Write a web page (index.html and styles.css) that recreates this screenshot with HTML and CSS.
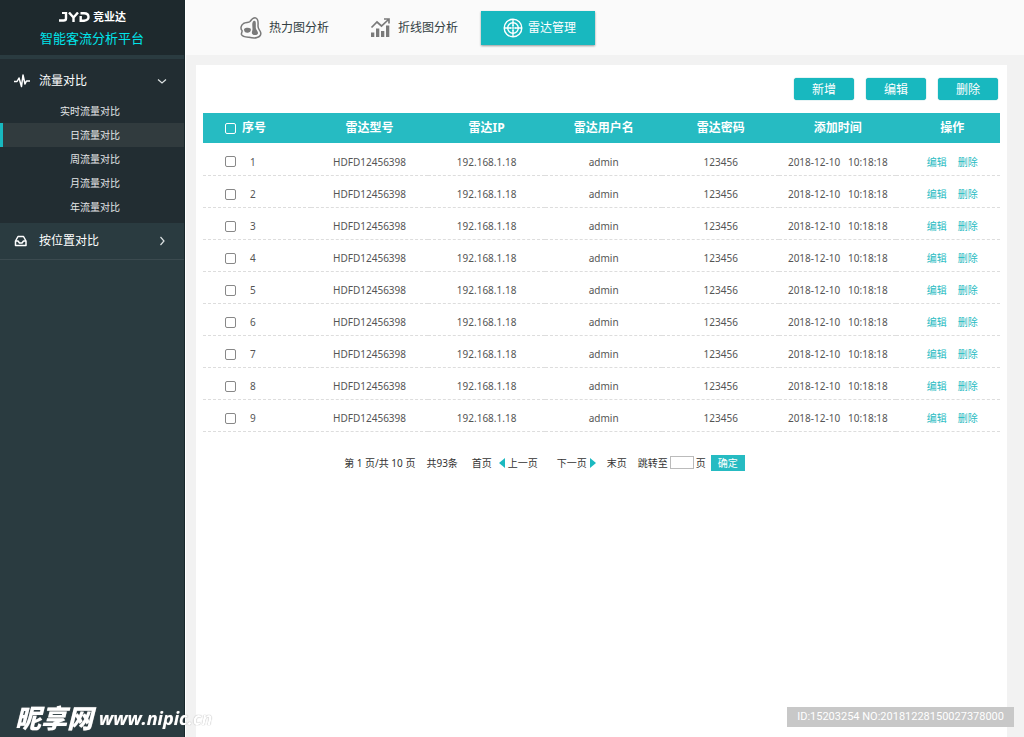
FILE: index.html
```html
<!DOCTYPE html>
<html lang="zh-CN">
<head>
<meta charset="utf-8">
<title>智能客流分析平台</title>
<link rel="stylesheet" href="styles.css">
</head>
<body>
<div class="app">
  <aside class="sidebar">
    <div class="brand">
      <div class="logo">
        <svg class="logo-mark" viewBox="0 0 32 10" aria-label="JYD" role="img">
          <g fill="none" stroke="#fff" stroke-width="2.4"><path d="M8 0V6.500Q8 8.500 5.500 8.500H1"/><path d="M11 0.500L15.500 5.500L20 0.500M15.500 5V10"/><path d="M21.500 8.700H26Q30.500 8.200 30.500 5Q30.500 1.300 26 1.300H22.500M22.700 4V9"/></g>
          <path d="M4 0H9V2H4Z" fill="#fff"/>
        </svg>
        <span>竞业达</span>
      </div>
      <h1 class="brand-title">智能客流分析平台</h1>
    </div>
    <nav class="menu">
      <section class="menu-open">
        <button class="menu-head" type="button" aria-expanded="true">
          <svg class="menu-icon" viewBox="0 0 16 14"><path d="M0 7.500H3L5 4L7.500 12.500L9 1L11 10L12.500 7H16" fill="none" stroke="#fff" stroke-width="1.500" stroke-linejoin="round"/></svg>
          <span>流量对比</span>
          <svg class="chevron" viewBox="0 0 10 10"><path d="M1 3.500L5 7L9 3.500" fill="none" stroke="#dde2e3" stroke-width="1.200"/></svg>
        </button>
        <ul class="submenu">
          <li><a href="#">实时流量对比</a></li>
          <li><a class="current" href="#">日流量对比</a></li>
          <li><a href="#">周流量对比</a></li>
          <li><a href="#">月流量对比</a></li>
          <li><a href="#">年流量对比</a></li>
        </ul>
      </section>
      <button class="menu-head menu-closed" type="button" aria-expanded="false">
        <svg class="menu-icon" viewBox="0 0 16 14"><path d="M1.500 7L4 2.500H9.500L12 7V11.500H1.500ZM1.500 7H4L5.500 9H8L9.500 7H12" fill="none" stroke="#fff" stroke-width="1.500" stroke-linejoin="round"/></svg>
        <span>按位置对比</span>
        <svg class="chevron" viewBox="0 0 10 10"><path d="M3.500 1L7 5L3.500 9" fill="none" stroke="#dde2e3" stroke-width="1.200"/></svg>
      </button>
    </nav>
  </aside>
  <div class="main">
    <header class="topbar">
      <a class="tab tab-heat" href="#">
        <svg class="tab-icon" viewBox="0 0 22 22"><path d="M15.500 0.900C13 0.500 11.500 2.500 10 4.500C8.500 6 6 5 3.500 6.500C0.500 8.500 0.500 12 2 13.500C2.500 15 1 16 1.500 17.500C2.500 20 6 20 9 20.200C12 21 14.500 21.500 17 20.500C20 20 21.500 17.500 20.500 15C19.500 12.500 18 12 18 9C18 6 19 2 15.500 0.900Z" fill="none" stroke="#7a7a7a" stroke-width="1.500"/><path d="M13.500 4C15.500 3 16 5 15.800 8V11C16 13 18 14 18 16C18 18.500 14 18.500 12.500 17.200C11 16 12.500 14 12.500 12C12.500 9.500 11.500 6 13.500 4ZM4 12C5.500 10.500 9 10.500 10.500 11.500C11.500 13 10.500 15.500 8 15.800C5.500 16 4 15 4 12Z" fill="#7a7a7a"/></svg>
        <span>热力图分析</span>
      </a>
      <a class="tab tab-line" href="#">
        <svg class="tab-icon" viewBox="0 0 22 22"><path d="M1 15.500H4.300V20H1ZM6 11.500H9.300V20H6ZM11 14H14.300V20H11ZM16 8.500H19.300V20H16Z" fill="#7a7a7a"/><path d="M1.500 10.500L7 5L11.500 9L18.500 2.500M14 2H19V6.500" fill="none" stroke="#7a7a7a" stroke-width="1.700"/></svg>
        <span>折线图分析</span>
      </a>
      <a class="tab tab-current" href="#" aria-current="page">
        <svg class="tab-icon" viewBox="0 0 22 22"><g fill="none" stroke="#fff"><circle cx="11" cy="11" r="8.800" stroke-width="1.400"/><circle cx="11" cy="11" r="5.300" stroke-width="1.400"/><path d="M11 2V9M11 13V20M2 11H9M13 11H20" stroke-width="1.400"/><path d="M11 8V14M8 11H14" stroke-width="1"/></g></svg>
        <span>雷达管理</span>
      </a>
    </header>
    <main class="panel">
      <div class="actions">
        <button type="button">新增</button>
        <button type="button">编辑</button>
        <button type="button">删除</button>
      </div>
      <table class="radar">
        <thead>
          <tr>
            <th class="col-index"><label><input type="checkbox" class="check check-all">序号</label></th>
            <th>雷达型号</th><th>雷达IP</th><th>雷达用户名</th><th>雷达密码</th><th>添加时间</th>
            <th class="col-ops">操作</th>
          </tr>
        </thead>
        <tbody>
          <tr><td class="col-index"><label><input type="checkbox" class="check">1</label></td><td>HDFD12456398</td><td>192.168.1.18</td><td>admin</td><td>123456</td><td><span class="stamp"><span>2018-12-10</span><span>10:18:18</span></span></td><td class="col-ops"><span class="ops"><a href="#">编辑</a><a href="#">删除</a></span></td></tr>
          <tr><td class="col-index"><label><input type="checkbox" class="check">2</label></td><td>HDFD12456398</td><td>192.168.1.18</td><td>admin</td><td>123456</td><td><span class="stamp"><span>2018-12-10</span><span>10:18:18</span></span></td><td class="col-ops"><span class="ops"><a href="#">编辑</a><a href="#">删除</a></span></td></tr>
          <tr><td class="col-index"><label><input type="checkbox" class="check">3</label></td><td>HDFD12456398</td><td>192.168.1.18</td><td>admin</td><td>123456</td><td><span class="stamp"><span>2018-12-10</span><span>10:18:18</span></span></td><td class="col-ops"><span class="ops"><a href="#">编辑</a><a href="#">删除</a></span></td></tr>
          <tr><td class="col-index"><label><input type="checkbox" class="check">4</label></td><td>HDFD12456398</td><td>192.168.1.18</td><td>admin</td><td>123456</td><td><span class="stamp"><span>2018-12-10</span><span>10:18:18</span></span></td><td class="col-ops"><span class="ops"><a href="#">编辑</a><a href="#">删除</a></span></td></tr>
          <tr><td class="col-index"><label><input type="checkbox" class="check">5</label></td><td>HDFD12456398</td><td>192.168.1.18</td><td>admin</td><td>123456</td><td><span class="stamp"><span>2018-12-10</span><span>10:18:18</span></span></td><td class="col-ops"><span class="ops"><a href="#">编辑</a><a href="#">删除</a></span></td></tr>
          <tr><td class="col-index"><label><input type="checkbox" class="check">6</label></td><td>HDFD12456398</td><td>192.168.1.18</td><td>admin</td><td>123456</td><td><span class="stamp"><span>2018-12-10</span><span>10:18:18</span></span></td><td class="col-ops"><span class="ops"><a href="#">编辑</a><a href="#">删除</a></span></td></tr>
          <tr><td class="col-index"><label><input type="checkbox" class="check">7</label></td><td>HDFD12456398</td><td>192.168.1.18</td><td>admin</td><td>123456</td><td><span class="stamp"><span>2018-12-10</span><span>10:18:18</span></span></td><td class="col-ops"><span class="ops"><a href="#">编辑</a><a href="#">删除</a></span></td></tr>
          <tr><td class="col-index"><label><input type="checkbox" class="check">8</label></td><td>HDFD12456398</td><td>192.168.1.18</td><td>admin</td><td>123456</td><td><span class="stamp"><span>2018-12-10</span><span>10:18:18</span></span></td><td class="col-ops"><span class="ops"><a href="#">编辑</a><a href="#">删除</a></span></td></tr>
          <tr><td class="col-index"><label><input type="checkbox" class="check">9</label></td><td>HDFD12456398</td><td>192.168.1.18</td><td>admin</td><td>123456</td><td><span class="stamp"><span>2018-12-10</span><span>10:18:18</span></span></td><td class="col-ops"><span class="ops"><a href="#">编辑</a><a href="#">删除</a></span></td></tr>
        </tbody>
      </table>
      <form class="pager">
        <span>第 1 页/共 10 页</span>
        <span>共93条</span>
        <a class="first" href="#">首页</a>
        <a class="step prev" href="#"><svg viewBox="0 0 6 10"><path d="M6 0V10L0 5Z" fill="#1bb9c0"/></svg>上一页</a>
        <a class="step next" href="#">下一页<svg viewBox="0 0 6 10"><path d="M0 0V10L6 5Z" fill="#1bb9c0"/></svg></a>
        <a href="#">末页</a>
        <span class="jump"><label for="page">跳转至</label><input id="page" type="text"><span>页</span><button type="button">确定</button></span>
      </form>
    </main>
  </div>
</div>
<div class="mark-site"><span class="mark-name">昵享网</span><span class="mark-url">www.nipic.cn</span></div>
<div class="mark-id">ID:15203254 NO:20181228150027378000</div>
</body>
</html>
```
FILE: styles.css
```css
* { box-sizing: border-box; }
body {
  margin: 0;
  font: 10px/16px "Noto Sans", "Noto Sans CJK SC", sans-serif;
  color: #555;
  background: #f2f2f2;
}
a { color: inherit; text-decoration: none; }
button { font: inherit; border: 0; padding: 0; cursor: pointer; }
svg { display: block; flex: none; }

.app { display: flex; min-height: 100vh; }

.sidebar {
  flex: none;
  width: 185px;
  background: #2a3b40;
  border-right: 1px solid #18272b;
  color: #fff;
}
.brand {
  height: 55px;
  padding-top: 9px;
  background: #1e292d;
  display: flex;
  flex-direction: column;
  align-items: center;
}
.logo { display: flex; align-items: center; gap: 3px; font-size: 11px; font-weight: 700; }
.logo-mark { width: 32px; height: 10px; }
.brand-title { margin: 4px 0 0; font-size: 13px; line-height: 18px; font-weight: 400; color: #00e4ea; }

.menu { padding-top: 4px; }
.menu-open { background: #222d32; padding-bottom: 4px; }
.menu-head {
  display: flex;
  align-items: center;
  width: 100%;
  height: 40px;
  padding: 3px 17px 0 14px;
  background: none;
  color: #fff;
  font-size: 12px;
}
.menu-head span { margin-left: 9px; }
.menu-icon { width: 16px; height: 14px; }
.chevron { width: 10px; height: 10px; margin-left: auto; }
.menu-closed { height: 37px; padding-top: 0; border-bottom: 1px solid #3b4a4f; }
.submenu { margin: 0; padding: 0; list-style: none; text-align: right; }
.submenu a {
  display: block;
  padding: 4px 64px 4px 0;
  color: #e4e7e8;
  border-left: 3px solid transparent;
}
.submenu .current { background: #313b3e; border-left-color: #18b8bf; }

.main { flex: 1; min-width: 0; display: flex; flex-direction: column; border-left: 1px solid #fff; }
.topbar {
  display: flex;
  align-items: center;
  gap: 41px;
  height: 55px;
  padding-left: 54px;
  background: #fafafa;
}
.tab { display: flex; align-items: center; gap: 7px; font-size: 12px; color: #333f43; }
.tab-icon { width: 22px; height: 22px; }
.tab-line { gap: 6px; }
.tab-current {
  height: 34px;
  padding: 0 19px 0 21px;
  margin-left: -18px;
  gap: 4px;
  background: #18b8bf;
  color: #fff;
  box-shadow: 0 1px 2px #0006;
}
.panel { flex: 1; margin: 10px 17px 0 10px; padding: 13px 7px 0; background: #fff; }
.actions { display: flex; justify-content: flex-end; gap: 12px; padding-right: 2px; }
.actions button {
  width: 60px;
  height: 22px;
  padding-top: 1px;
  border-radius: 3px;
  background: #18b8bf;
  box-shadow: 0 0 1px #0a8f95;
  color: #fff;
  font-size: 12px;
}

.radar { width: 100%; margin-top: 13px; border-collapse: collapse; table-layout: fixed; }
.radar th, .radar td { padding: 0; text-align: center; }
.radar th { height: 30px; background: #26bbc2; color: #fff; font-size: 12px; }
.radar td { height: 32px; padding-top: 6px; border-bottom: 1px dashed #ddd; }
.radar .col-index { width: 108px; padding-left: 22px; }
.radar .col-ops { width: 13%; padding-left: 8px; }
.col-index label { display: flex; align-items: center; gap: 14px; }
th.col-index label { gap: 6px; }
.check {
  appearance: none;
  width: 11px;
  height: 11px;
  margin: 0;
  border: 1px solid #888;
  border-radius: 2px;
  background: #fff;
}
.check-all { background: transparent; border-color: #fff; }
.stamp { display: flex; justify-content: center; gap: 8px; }
.ops { display: flex; justify-content: center; gap: 11px; color: #26bbc2; }

.pager {
  display: flex;
  align-items: center;
  justify-content: center;
  gap: 11px;
  margin-top: 23px;
  padding-right: 114px;
  color: #333;
}
.first { margin-left: 3px; }
.step { display: flex; align-items: center; gap: 3px; }
.step svg { width: 6px; height: 10px; }
.prev { margin-left: -4px; }
.next { margin-left: 8px; }
.jump { display: flex; align-items: center; gap: 2px; }
.jump input { width: 24px; height: 13px; padding: 0 2px; border: 1px solid #bbb; font: inherit; }
.jump button { width: 34px; height: 16px; margin-left: 3px; background: #26bbc2; color: #fff; }

.mark-site {
  position: fixed;
  left: 15px;
  bottom: 6px;
  display: flex;
  align-items: center;
  gap: 6px;
  color: #fff;
  font-style: italic;
  font-weight: 700;
  line-height: 26px;
  text-shadow: 0 0 1px #888;
}
.mark-name { font-size: 26px; font-weight: 900; }
.mark-url { font-family: "Open Sans", "Noto Sans", sans-serif; font-size: 18px; }
.mark-id {
  position: fixed;
  right: 10px;
  bottom: 10px;
  padding: 2px 10px;
  background: #c8c8c8;
  color: #fff;
  font-family: Roboto, sans-serif;
  font-size: 11px;
}
```
